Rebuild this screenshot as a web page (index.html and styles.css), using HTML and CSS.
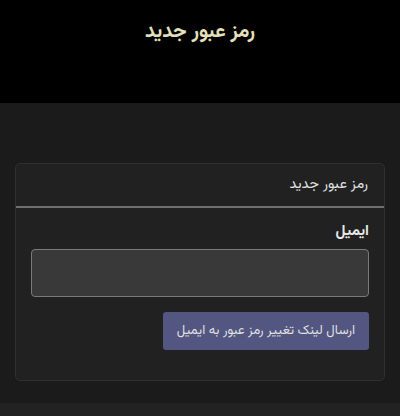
FILE: index.html
```html
<!DOCTYPE html>
<html lang="fa" dir="rtl">
<head>
<meta charset="utf-8">
<link rel="stylesheet" href="styles.css">
</head>
<body>
<header class="top">
  <h1 class="title">رمز عبور جدید</h1>
</header>
<main class="main">
  <section class="card">
    <div class="card-header">رمز عبور جدید</div>
    <div class="card-body">
      <label class="label">ایمیل</label>
      <input class="input" type="text">
      <div class="actions">
        <button class="btn">ارسال لینک تغییر رمز عبور به ایمیل</button>
      </div>
    </div>
  </section>
</main>
<div class="bottom"></div>
</body>
</html>
```
FILE: styles.css
```css
html, body {
  margin: 0;
  padding: 0;
  background: #222222;
  font-family: "Vazirmatn", "Noto Sans Arabic", "DejaVu Sans", sans-serif;
}
.top {
  height: 103px;
  background: #000000;
  display: flex;
  justify-content: center;
}
.title {
  margin: 17px 0 0;
  font-size: 20px;
  font-weight: bold;
  color: #e4e0bc;
  line-height: 30px;
}
.main {
  background: #1b1b1b;
  padding: 60px 15px 22px;
  height: 300px;
  box-sizing: border-box;
}
.card {
  background: #212121;
  border: 1px solid #2f2f2f;
  border-radius: 5px;
  height: 218px;
  box-sizing: border-box;
}
.card-header {
  height: 44px;
  box-sizing: border-box;
  padding: 10px 16px 0;
  font-size: 14.5px;
  color: #e0e0e0;
  border-bottom: 2px solid #6f6f6f;
  line-height: 22px;
}
.card-body {
  padding: 14px 15px;
}
.label {
  display: block;
  font-size: 15px;
  font-weight: bold;
  color: #e8e8e8;
  line-height: 20px;
  margin-bottom: 7px;
}
.input {
  display: block;
  width: 100%;
  box-sizing: border-box;
  height: 48px;
  background: #393939;
  border: 1px solid #7a7a7a;
  border-radius: 4px;
  margin: 0;
}
.actions {
  margin-top: 15px;
  display: flex;
}
.btn {
  height: 38px;
  padding: 0 14px;
  background: #525680;
  color: #e0e0e0;
  border: none;
  border-radius: 3px;
  font-family: inherit;
  font-size: 13.1px;
}
.bottom {
  height: 13px;
  background: #222222;
}
```
